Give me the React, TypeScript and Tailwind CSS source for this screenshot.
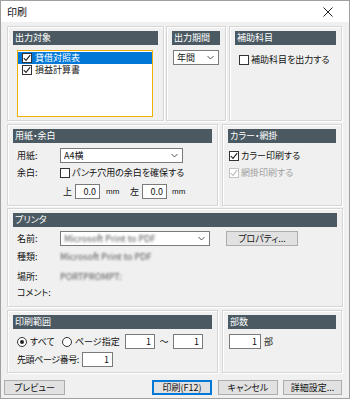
import React from 'react';

const Check = ({ checked = false, disabled = false }: { checked?: boolean; disabled?: boolean }) => (
  <span
    className={`inline-flex items-center justify-center w-[10px] h-[10px] shrink-0 border ${disabled ? 'border-[#c4c4c4]' : 'border-[#333]'} bg-white`}
  >
    {checked && (
      <svg width="8" height="8" viewBox="0 0 8 8">
        <path d="M0.8 4.2 L3 6.4 L7.2 1.2" fill="none" stroke={disabled ? '#bdbdbd' : '#222'} strokeWidth="1.1" />
      </svg>
    )}
  </span>
);

const Radio = ({ on = false }: { on?: boolean }) => (
  <span className="inline-flex items-center justify-center w-[10px] h-[10px] shrink-0 rounded-full border border-[#333] bg-white">
    {on && <span className="w-[4px] h-[4px] rounded-full bg-[#222]" />}
  </span>
);

const Chevron = () => (
  <svg width="7" height="5" viewBox="0 0 7 5" className="shrink-0">
    <path d="M0.5 1 L3.5 4 L6.5 1" fill="none" stroke="#555" strokeWidth="1" />
  </svg>
);

const Select = ({ value, className = '', blur = false }: { value: string; className?: string; blur?: boolean }) => (
  <div className={`flex items-center justify-between h-[15px] border border-[#7a7a7a] bg-white pl-[3px] pr-[4px] ${className}`}>
    <span className={blur ? 'blur-[1.2px] text-[#555]' : ''}>{value}</span>
    <Chevron />
  </div>
);

const NumBox = ({ value, className = '' }: { value: string; className?: string }) => (
  <div className={`h-[15px] shrink-0 border border-[#7a7a7a] bg-white text-right pr-[3px] leading-[13px] ${className}`}>{value}</div>
);

const Group = ({ title, className = '', children }: { title: string; className?: string; children?: React.ReactNode }) => (
  <div className={`border border-[#d6d6d6] shadow-[inset_1px_1px_0_#fff,1px_1px_0_#fff] ${className}`}>
    <div className="mx-[5px] mt-[4px] h-[14px] bg-[#4b5a62] text-white leading-[14px] pl-[2px]">{title}</div>
    {children}
  </div>
);

const Button = ({ label, className = '', focused = false }: { label: string; className?: string; focused?: boolean }) => (
  <div
    className={`h-[15px] flex items-center justify-center bg-[#e1e1e1] border ${focused ? 'border-[#0078d7] shadow-[inset_0_0_0_1px_#0078d7]' : 'border-[#adadad]'} ${className}`}
  >
    {label}
  </div>
);

export default function App() {
  return (
    <div className="w-[350px] h-[399px] flex flex-col bg-[#f0f0f0] border border-[#a0a0a0] text-[9px] leading-[12px] text-[#111] font-['Noto_Sans_CJK_JP','Liberation_Sans',sans-serif] [font-feature-settings:'palt'] overflow-hidden">
      {/* title bar */}
      <div className="h-[21px] bg-white flex items-center justify-between pl-[6px] pr-[16px] shrink-0">
        <span className="text-[10px]">印刷</span>
        <svg width="10" height="10" viewBox="0 0 10 10">
          <path d="M0.5 0.5 L9.5 9.5 M9.5 0.5 L0.5 9.5" stroke="#222" strokeWidth="1" />
        </svg>
      </div>

      <div className="flex flex-col pl-[6px] pr-[6px] pt-[4px]">
        {/* row 1 */}
        <div className="flex h-[95px]">
          <Group title="出力対象" className="w-[157px]">
            <div className="ml-[9px] mt-[5px] w-[136px] h-[67px] border border-[#f0b000] bg-white pt-[1px] leading-[12px]">
              <div className="flex items-center gap-[3px] h-[12px] bg-[#0078d7] text-white pl-[4px]">
                <Check checked />
                <span>貸借対照表</span>
              </div>
              <div className="flex items-center gap-[3px] h-[12px] pl-[4px]">
                <Check checked />
                <span>損益計算書</span>
              </div>
            </div>
          </Group>
          <Group title="出力期間" className="w-[60px] ml-[2px]">
            <Select value="年間" className="ml-[6px] mt-[5px] w-[46px]" />
          </Group>
          <Group title="補助科目" className="w-[113px] ml-[3px]">
            <div className="flex items-center gap-[2px] ml-[9px] mt-[9px]">
              <Check />
              <span>補助科目を出力する</span>
            </div>
          </Group>
        </div>

        {/* row 2 */}
        <div className="flex h-[82px] mt-[3px]">
          <Group title="用紙・余白" className="w-[211px]">
            <div className="flex items-center h-[15px] mt-[5px] pl-[9px]">
              <span className="w-[43px]">用紙:</span>
              <Select value="A4横" className="w-[123px]" />
            </div>
            <div className="flex items-center h-[12px] mt-[4px] pl-[9px]">
              <span className="w-[43px]">余白:</span>
              <Check />
              <span className="ml-[2px]">パンチ穴用の余白を確保する</span>
            </div>
            <div className="flex items-center h-[15px] mt-[5px] pl-[55px]">
              <span className="w-[12px]">上</span>
              <NumBox value="0.0" className="w-[25px]" />
              <span className="ml-[6px] w-[24px] text-[8px] font-['Liberation_Sans',sans-serif]">mm</span>
              <span className="w-[12px]">左</span>
              <NumBox value="0.0" className="w-[25px]" />
              <span className="ml-[5px] text-[8px] font-['Liberation_Sans',sans-serif]">mm</span>
            </div>
          </Group>
          <Group title="カラー・網掛" className="w-[120px] ml-[4px]">
            <div className="flex items-center gap-[2px] ml-[6px] mt-[7px]">
              <Check checked />
              <span>カラー印刷する</span>
            </div>
            <div className="flex items-center gap-[2px] ml-[6px] mt-[5px] text-[#a0a0a0]">
              <Check checked disabled />
              <span>網掛印刷する</span>
            </div>
          </Group>
        </div>

        {/* row 3 */}
        <Group title="プリンタ" className="h-[99px] mt-[2px]">
          <div className="flex items-center h-[15px] mt-[4px] pl-[9px]">
            <span className="w-[43px]">名前:</span>
            <Select value="Microsoft Print to PDF" blur className="w-[150px]" />
            <Button label="プロパティ..." className="w-[72px] ml-[16px] h-[14px]" />
          </div>
          <div className="flex items-center h-[22px] pl-[9px]">
            <span className="w-[43px]">種類:</span>
            <span className="blur-[1.2px] text-[#555]">Microsoft Print to PDF</span>
          </div>
          <div className="flex items-center h-[17px] pl-[9px]">
            <span className="w-[43px]">場所:</span>
            <span className="blur-[1.2px] text-[#555]">PORTPROMPT:</span>
          </div>
          <div className="flex items-center h-[15px] pl-[9px]">
            <span className="w-[43px]">コメント:</span>
          </div>
        </Group>

        {/* row 4 */}
        <div className="flex h-[63px] mt-[3px]">
          <Group title="印刷範囲" className="w-[211px]">
            <div className="flex items-center h-[15px] mt-[5px] pl-[9px]">
              <Radio on />
              <span className="ml-[3px] w-[32px]">すべて</span>
              <Radio />
              <span className="ml-[3px] w-[50px]">ページ指定</span>
              <NumBox value="1" className="w-[30px]" />
              <span className="w-[18px] text-center">～</span>
              <NumBox value="1" className="w-[30px]" />
            </div>
            <div className="flex items-center h-[15px] mt-[3px] pl-[9px]">
              <span className="w-[65px] whitespace-nowrap tracking-[-0.4px]">先頭ページ番号:</span>
              <NumBox value="1" className="w-[31px]" />
            </div>
          </Group>
          <Group title="部数" className="w-[120px] ml-[4px]">
            <div className="flex items-center mt-[5px] ml-[6px]">
              <NumBox value="1" className="w-[32px]" />
              <span className="ml-[3px]">部</span>
            </div>
          </Group>
        </div>
      </div>

      {/* buttons */}
      <div className="flex items-center mt-[7px] pl-[3px]">
        <Button label="プレビュー" className="w-[61px]" />
        <Button label="印刷(F12)" focused className="w-[60px] ml-[87px]" />
        <Button label="キャンセル" className="w-[60px] ml-[6px]" />
        <Button label="詳細設定..." className="w-[59px] ml-[5px]" />
      </div>
    </div>
  );
}
